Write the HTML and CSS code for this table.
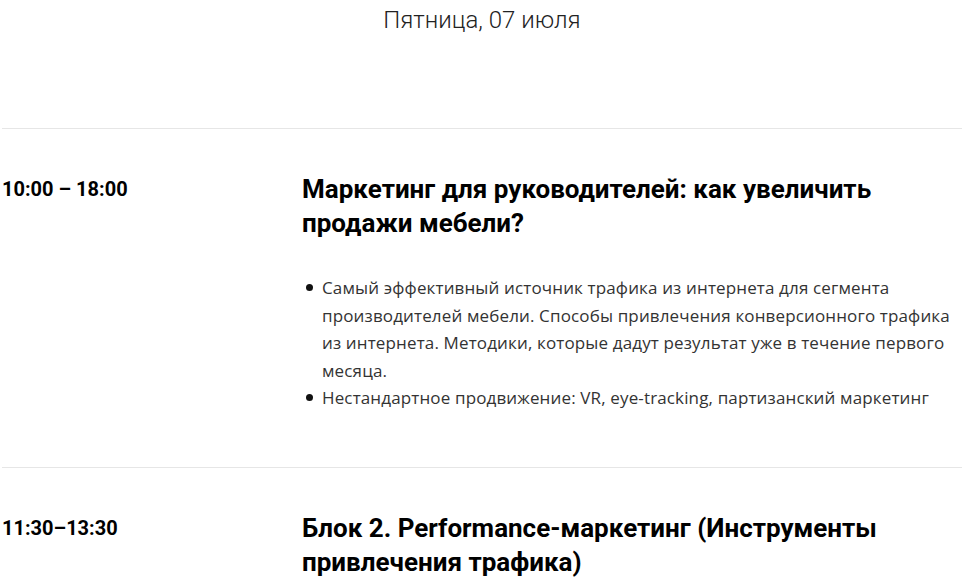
FILE: index.html
```html
<!DOCTYPE html>
<html lang="ru">
<head>
<meta charset="utf-8">
<link rel="stylesheet" href="styles.css">
</head>
<body>
<div class="page">
  <h2 class="day">Пятница, 07 июля</h2>
  <div class="schedule">
    <div class="event">
      <div class="time">10:00 – 18:00</div>
      <div class="info">
        <h3 class="title">Маркетинг для руководителей: как увеличить продажи мебели?</h3>
        <ul class="points">
          <li>Самый эффективный источник трафика из интернета для сегмента производителей мебели. Способы привлечения конверсионного трафика из интернета. Методики, которые дадут результат уже в течение первого месяца.</li>
          <li>Нестандартное продвижение: VR, eye-tracking, партизанский маркетинг</li>
        </ul>
      </div>
    </div>
    <div class="event">
      <div class="time">11:30–13:30</div>
      <div class="info">
        <h3 class="title">Блок 2. Performance-маркетинг (Инструменты привлечения трафика)</h3>
      </div>
    </div>
  </div>
</div>
</body>
</html>
```

FILE: styles.css
```css
html, body {
  margin: 0;
  padding: 0;
  background: #fff;
}
.page {
  width: 960px;
  margin-left: 2px;
  font-family: Roboto, "Liberation Sans", sans-serif;
}
.day {
  margin: 0;
  padding-top: 4px;
  height: 124px;
  text-align: center;
  font-weight: 300;
  font-size: 24px;
  line-height: 32px;
  color: #222;
}
.event {
  display: flex;
  border-top: 1px solid #e6e6e6;
  padding: 43px 0 55px;
}
.time {
  width: 300px;
  flex: none;
  font-weight: 700;
  font-size: 20px;
  line-height: 34px;
  color: #000;
}
.info {
  flex: 1;
}
.title {
  margin: 0;
  font-weight: 700;
  font-size: 26px;
  line-height: 34px;
  color: #000;
}
.points {
  margin: 34px 0 0;
  padding-left: 20px;
  list-style: none;
  font-family: "Open Sans", sans-serif;
  font-size: 17px;
  letter-spacing: 0.14px;
  line-height: 27.5px;
  color: #333;
}
.points li {
  position: relative;
}
.points li::before {
  content: "";
  position: absolute;
  left: -16px;
  top: 10px;
  width: 7px;
  height: 7px;
  border-radius: 50%;
  background: #111;
}
```
